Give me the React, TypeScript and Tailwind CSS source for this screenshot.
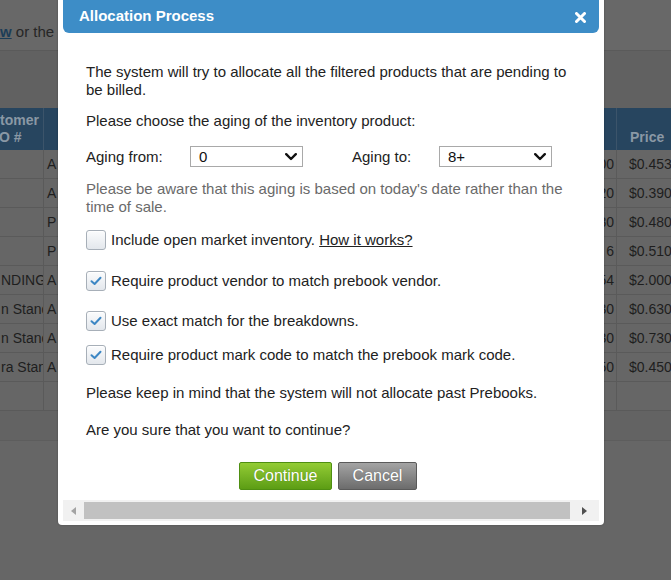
import React from "react"

const rows = [
  { a: "", b: "A", c: "100", price: "$0.453" },
  { a: "", b: "A", c: "120", price: "$0.390" },
  { a: "", b: "P", c: "180", price: "$0.480" },
  { a: "", b: "P", c: "6", price: "$0.510" },
  { a: "NDING", b: "A", c: "154", price: "$2.000" },
  { a: "n Standard", b: "A", c: "130", price: "$0.630" },
  { a: "n Standard", b: "A", c: "130", price: "$0.730" },
  { a: "ra Standard", b: "A", c: "150", price: "$0.450" },
]

function Chevron() {
  return (
    <svg width="12" height="8" viewBox="0 0 12 8" className="shrink-0">
      <path d="M1.2 1.2 L6 6 L10.8 1.2" fill="none" stroke="#111" strokeWidth="2.4" strokeLinecap="round" strokeLinejoin="round" />
    </svg>
  )
}

function FakeSelect({ value }: { value: string }) {
  return (
    <div className="flex h-[21px] w-[113px] items-center justify-between border border-[#a9a9a9] bg-white pl-[8px] pr-[5px] text-[15px] text-[#111]">
      <span>{value}</span>
      <Chevron />
    </div>
  )
}

function Checkbox({ checked }: { checked: boolean }) {
  return (
    <div className="flex h-[20px] w-[20px] shrink-0 items-center justify-center rounded-[3px] border border-[#a7afb8] bg-gradient-to-b from-[#fbfcfd] to-[#e3e7ec] shadow-[inset_0_1px_0_#fff]">
      {checked && (
        <svg width="12" height="10" viewBox="0 0 12 10">
          <path d="M1.5 5.2 L4.6 8 L10.5 1.8" fill="none" stroke="#3d87c4" strokeWidth="2" strokeLinecap="round" strokeLinejoin="round" />
        </svg>
      )}
    </div>
  )
}

export default function App() {
  return (
    <div className="relative h-[580px] w-[671px] overflow-hidden bg-[#666666] font-['Liberation_Sans',Arial,sans-serif]">
      {/* page behind the overlay */}
      <div className="flex h-[51px] items-start border-b border-[#5a5a5a] bg-[#686868] pt-[23px] text-[15px] leading-[18px] text-[#262626]">
        <span className="font-bold text-[#1c3d57] underline">w</span>
        <span>&nbsp;or the</span>
      </div>
      <div className="h-[57px] bg-[#616161]" />

      <div className="text-[13px] text-[#1e1e1e]">
        <div className="flex h-[42px] bg-[#27455f] text-[14px] font-bold leading-[17px] text-[#8a98a5]">
          <div className="flex w-[44px] flex-col justify-center overflow-hidden whitespace-nowrap border-r border-[#3c546a]">
            <span>tomer</span>
            <span className="-ml-[1px]">O #</span>
          </div>
          <div className="w-[573px] border-r border-[#3c546a]" />
          <div className="flex flex-1 items-end pb-[4px] pl-[13px]">Price</div>
        </div>
        {rows.map((r, i) => (
          <div key={i} className="flex h-[29px] border-b border-[#5a5a5a] text-[14px]">
            <div className="flex w-[44px] items-center overflow-hidden whitespace-nowrap border-r border-[#5a5a5a] pl-[1px]">{r.a}</div>
            <div className="flex w-[573px] items-center justify-between border-r border-[#5a5a5a] pl-[3px] pr-[2px]">
              <span>{r.b}</span>
              <span>{r.c}</span>
            </div>
            <div className="flex flex-1 items-center overflow-hidden whitespace-nowrap pl-[12px]">{r.price}</div>
          </div>
        ))}
        <div className="flex h-[29px] border-b border-[#5a5a5a]">
          <div className="w-[44px] border-r border-[#5a5a5a]" />
          <div className="w-[573px] border-r border-[#5a5a5a]" />
        </div>
        <div className="h-[30px] border-b border-[#5d5d5d] bg-[#636363]" />
      </div>

      {/* dialog */}
      <div className="absolute left-[58px] top-[-10px] w-[546px] rounded-[4px] bg-white p-[5px] pb-[4px] shadow-[0_0_2px_rgba(0,0,0,0.3)]">
        <div className="flex h-[38px] items-end justify-between rounded-[6px] bg-[#3d8dc7] pb-[8px] pl-[16px] pr-[13px]">
          <span className="text-[15px] font-bold leading-[18px] text-white">Allocation Process</span>
          <svg width="11" height="11" viewBox="0 0 11 11" className="mb-[2px]">
            <path d="M1.5 1.5 L9.5 9.5 M9.5 1.5 L1.5 9.5" stroke="#fff" strokeWidth="3" strokeLinecap="round" />
          </svg>
        </div>

        <div className="pl-[23px] pr-[24px] text-[15px] leading-[18px] text-[#222]">
          <p className="mt-[30px]">
            The system will try to allocate all the filtered products that are pending to be billed.
          </p>
          <p className="mt-[13px]">Please choose the aging of the inventory product:</p>

          <div className="mt-[16px] flex h-[21px] items-center">
            <span className="w-[104px]">Aging from:</span>
            <FakeSelect value="0" />
            <span className="ml-[49px] w-[87px]">Aging to:</span>
            <FakeSelect value="8+" />
          </div>

          <p className="mt-[13px] text-[#6a6a6a]">
            Please be aware that this aging is based on today's date rather than the time of sale.
          </p>

          <div className="mt-[14px] flex items-center gap-[5px]">
            <Checkbox checked={false} />
            <span>
              Include open market inventory. <span className="underline">How it works?</span>
            </span>
          </div>
          <div className="mt-[21px] flex items-center gap-[5px]">
            <Checkbox checked />
            <span>Require product vendor to match prebook vendor.</span>
          </div>
          <div className="mt-[20px] flex items-center gap-[5px]">
            <Checkbox checked />
            <span>Use exact match for the breakdowns.</span>
          </div>
          <div className="mt-[14px] flex items-center gap-[5px]">
            <Checkbox checked />
            <span>Require product mark code to match the prebook mark code.</span>
          </div>

          <p className="mt-[19px]">Please keep in mind that the system will not allocate past Prebooks.</p>
          <p className="mt-[19px]">Are you sure that you want to continue?</p>

          <div className="mt-[23px] flex justify-center gap-[6px] pr-[5px]">
            <button className="h-[28px] w-[93px] rounded-[2px] border border-[#4f8f12] bg-gradient-to-b from-[#93cc34] to-[#5c9d14] text-[16px] text-white [text-shadow:0_0_1px_rgba(0,0,0,0.3)]">
              Continue
            </button>
            <button className="h-[28px] w-[79px] rounded-[2px] border border-[#5a5a5a] bg-gradient-to-b from-[#a4a4a4] to-[#6c6c6c] text-[16px] text-white [text-shadow:0_0_1px_rgba(0,0,0,0.3)]">
              Cancel
            </button>
          </div>
        </div>

        {/* horizontal scrollbar */}
        <div className="mt-[10px] flex h-[21px] items-center bg-[#f1f1f1]">
          <div className="flex w-[21px] justify-center">
            <svg width="5" height="8" viewBox="0 0 5 8"><path d="M5 0 L0 4 L5 8 Z" fill="#a3a3a3" /></svg>
          </div>
          <div className="h-[17px] flex-1 bg-[#c1c1c1]" />
          <div className="flex w-[29px] justify-center">
            <svg width="5" height="8" viewBox="0 0 5 8"><path d="M0 0 L5 4 L0 8 Z" fill="#505050" /></svg>
          </div>
        </div>
      </div>
    </div>
  )
}
